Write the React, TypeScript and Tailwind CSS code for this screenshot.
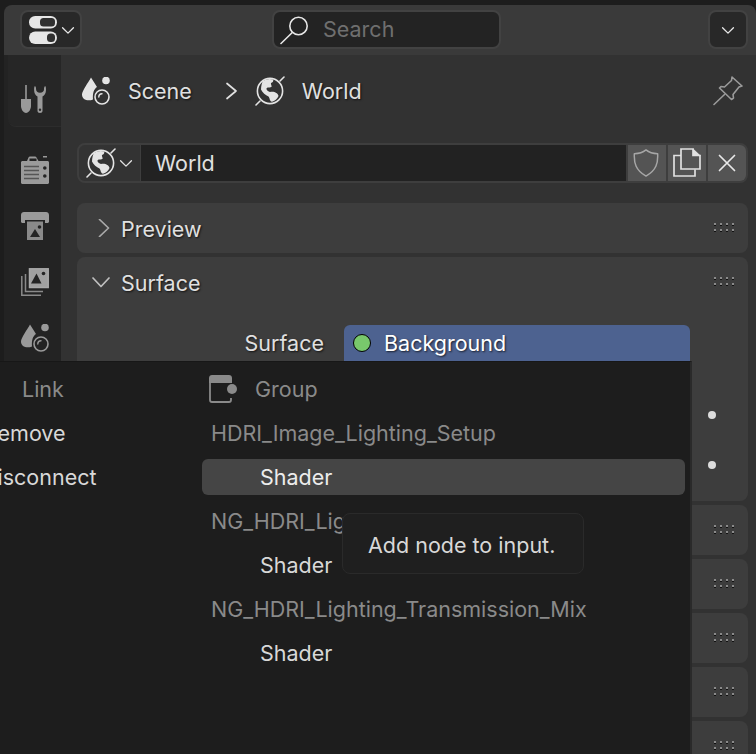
import React from "react";

const Chev = ({ className = "", d = "M3 6l6 6 6-6" }: { className?: string; d?: string }) => (
  <svg viewBox="0 0 18 18" className={className} fill="none" stroke="currentColor" strokeWidth="1.7" strokeLinecap="round" strokeLinejoin="round"><path d={d} /></svg>
);

const Globe = ({ className = "" }: { className?: string }) => (
  <svg viewBox="0 0 30 30" className={className}>
    <circle cx="15" cy="15" r="12.6" fill="none" stroke="#e4e4e4" strokeWidth="1.6" />
    <path d="M25 5l4-4M5 25l-4 4" stroke="#e4e4e4" strokeWidth="1.6" strokeLinecap="round" />
    <path d="M9 4.500c3-1.600 6-2 9-1 1 1.500-.5 3-2 3.500-.5 1.600 1 2.500.5 4-2 1-4.500-.5-5 1.500-.3 2 2 3 3.500 3.500 4-1 8 1 8.500 4-1 3-4 5-6.500 5.800-2.500-.5-2-3.500-3.500-5.300-3-1.500-6-3.500-7.500-7 0-3.500 1-7 2.500-10z" fill="#e4e4e4" />
  </svg>
);

const SceneIcon = ({ color = "#e4e4e4" }: { color?: string }) => (
  <svg viewBox="0 0 28 28" className="w-[28px] h-[28px]">
    <path d="M9 0.500L15 10C12 12 10.500 16 11 22.500 6 24.500 0 23 0 17.500 0 14 6 6 9 0.500z" fill={color} />
    <circle cx="24" cy="3.500" r="3.800" fill={color} />
    <circle cx="20" cy="20" r="7" fill="none" stroke={color} strokeWidth="1.600" />
    <path d="M16.800 20c0-1.800 1.400-3.200 3.200-3.200" fill="none" stroke={color} strokeWidth="1.400" strokeLinecap="round" />
  </svg>
);

const Dots = () => (
  <svg width="21" height="10" viewBox="0 0 21 10" className="block">
    {[0, 6, 12, 18].map((x) => (
      <g key={x}>
        <rect x={x} y="0" width="2" height="2" fill="#8a8a8a" />
        <rect x={x} y="2" width="2" height="1" fill="#111" />
        <rect x={x} y="6" width="2" height="2" fill="#8a8a8a" />
        <rect x={x} y="8" width="2" height="1" fill="#111" />
      </g>
    ))}
  </svg>
);

const shadow = "[text-shadow:1px_1px_2px_rgba(0,0,0,0.7)]";

const EmptyPanel = () => (
  <div className="h-[50px] rounded-[8px] bg-[#3d3d3d] flex items-center justify-end pr-[13px] shrink-0">
    <Dots />
  </div>
);

export default function App() {
  return (
    <div className="relative w-[756px] h-[754px] overflow-hidden bg-[#1d1d1d] pt-[5px] pl-[4px] text-[21.5px] leading-[25px]" style={{ fontFamily: "Inter, 'Noto Sans', sans-serif" }}>
      <div className="flex flex-col h-[749px] rounded-t-[8px] overflow-hidden">
        {/* header */}
        <div className="h-[50px] shrink-0 bg-[#3a3a3a] flex items-center pl-[16px] pr-[8px] pb-[1px]">
          <div className="w-[62px] h-[39px] rounded-[8px] bg-[#282828] border-2 border-[#424242] flex items-center pl-[7px] gap-[4px]">
            <svg viewBox="0 0 28 28" className="w-[28px] h-[28px]">
              <rect x="0" y="0" width="28" height="12.500" rx="6.200" fill="#e6e6e6" />
              <rect x="11" y="2" width="15" height="8.500" rx="3.500" fill="#303030" />
              <rect x="0" y="15.500" width="28" height="12.500" rx="6.200" fill="#e6e6e6" />
              <rect x="18" y="17.500" width="8" height="8.500" rx="3.500" fill="#303030" />
            </svg>
            <Chev className="w-[14px] h-[14px] text-[#e6e6e6]" d="M2 6l7 7 7-7" />
          </div>
          <div className="ml-[190px] w-[229px] h-[39px] rounded-[8px] bg-[#232323] border-2 border-[#424242] flex items-center pl-[6px] gap-[13px]">
            <svg viewBox="0 0 30 30" className="w-[30px] h-[30px]" fill="none" stroke="#e6e6e6" strokeWidth="1.600" strokeLinecap="round">
              <circle cx="18.500" cy="11" r="8.700" />
              <path d="M12.300 17.500L1 28.500" />
            </svg>
            <span className="text-[#6f6f6f]">Search</span>
          </div>
          <div className="ml-auto w-[40px] h-[39px] rounded-[8px] bg-[#282828] border-2 border-[#424242] flex items-center justify-center">
            <Chev className="w-[14px] h-[14px] text-[#e6e6e6]" d="M2 6l7 7 7-7" />
          </div>
        </div>

        <div className="flex flex-1 min-h-0">
          {/* sidebar */}
          <div className="w-[57px] shrink-0 bg-[#232323] flex flex-col">
            <div className="h-[72px] ml-[4px] rounded-bl-[8px] bg-[#262626] border-b border-[#2c2c2c] flex items-center pl-[13px]">
              <svg viewBox="0 0 28 28" className="w-[28px] h-[28px] mt-[17px]">
                <rect x="4.200" y="0" width="1.600" height="14" fill="#9a9a9a" />
                <path d="M0 14h10v7c0 3-2.200 7-5 7s-5-4-5-7z" fill="#9a9a9a" />
                <path d="M14 1c-1 .8-.9 2.500-.9 4 0 3 1.300 5.500 3.400 6.500v14.500c0 1 1 2 2.500 2s2.500-1 2.500-2v-14.500c2.100-1 3.500-3.500 3.500-6.500 0-1.500.1-3.200-.9-4-1 .6-1.100 2.500-1.100 3.500 0 2-1.500 3.200-4 3.200s-3.900-1.200-3.900-3.200c0-1-.1-2.900-1.100-3.500z" fill="#9a9a9a" />
                <circle cx="19" cy="24.800" r="1.200" fill="#2a2a2a" />
              </svg>
            </div>
            <div className="flex flex-col pl-[17px] pt-[29px] gap-[28px]">
              <svg viewBox="0 0 28 28" className="w-[28px] h-[28px]">
                <path d="M1.500 5h4.500l1.500-3.500c.3-.6.800-1 1.500-1h5c.7 0 1.200.4 1.500 1L17.500 5h9c.8 0 1.500.7 1.500 1.500v20c0 .8-.7 1.500-1.500 1.500h-25C.7 28 0 27.300 0 26.500v-20C0 5.700.7 5 1.500 5z" fill="#9a9a9a" />
                <rect x="22" y="0" width="4" height="1.500" fill="#9a9a9a" />
                <rect x="8.500" y="2.500" width="7" height="2.500" fill="#232323" />
                <path d="M3 10.500h15M3 14.500h15M3 18.500h15M3 22.500h15" stroke="#555" strokeWidth="1.700" />
                <circle cx="23.800" cy="12" r="1.800" fill="#232323" />
                <circle cx="23.800" cy="20" r="1.800" fill="#232323" />
              </svg>
              <svg viewBox="0 0 28 28" className="w-[28px] h-[28px]">
                <path d="M3 0h22c1.700 0 3 1.300 3 3v6.500c0 .8-.7 1.500-1.500 1.500H24V8H4v3H1.500C.7 11 0 10.300 0 9.500V3c0-1.700 1.300-3 3-3z" fill="#9a9a9a" />
                <rect x="6" y="9.500" width="16" height="18.500" fill="#8a8a8a" />
                <path d="M9 25l5-8 5 8z" fill="#232323" />
                <circle cx="18.500" cy="15" r="1.800" fill="#232323" />
              </svg>
              <svg viewBox="0 0 28 28" className="w-[28px] h-[28px]">
                <path d="M0.800 8v19.200h19.200M4.500 6v17.500H22" fill="none" stroke="#8a8a8a" strokeWidth="1.500" />
                <rect x="8.500" y="0.800" width="18.700" height="18.700" fill="#a0a0a0" stroke="#a8a8a8" strokeWidth="1.500" />
                <path d="M10 15.500l5.500-10 5 10z" fill="#232323" />
                <circle cx="22.500" cy="5.500" r="1.800" fill="#232323" />
              </svg>
              <SceneIcon color="#9a9a9a" />
            </div>
          </div>

          {/* main */}
          <div className="flex-1 min-w-0 bg-[#323232] pl-[16px] pr-[8px]">
            <div className="h-[72px] flex items-center text-[#e0e0e0] relative">
              <span className="ml-[5px]"><SceneIcon /></span>
              <span className={`ml-[18px] ${shadow}`}>Scene</span>
              <Chev className="ml-[30px] w-[18px] h-[18px] text-[#e0e0e0]" d="M5 1.500l9 7.500-9 7.500" />
              <Globe className="ml-[15px] w-[30px] h-[30px]" />
              <span className={`ml-[17px] ${shadow}`}>World</span>
              <svg viewBox="0 0 30 30" className="ml-auto mr-[5px] w-[30px] h-[30px]" fill="none" stroke="#9a9a9a" strokeWidth="1.600" strokeLinejoin="round" strokeLinecap="round">
                <path d="M19 1l10 9-3 1-6 7.500.5 3.500-2 1.500L6.500 12 8 10.500l3.500.5L18.500 4.500z" />
                <path d="M11.500 18.500L1 28.500" />
              </svg>
            </div>

            <div className="mt-[16px] h-[40px] rounded-[8px] bg-[#3e3e3e] border-2 border-[#3e3e3e] flex gap-[2px] text-[#e0e0e0]">
              <div className="w-[61px] shrink-0 bg-[#333333] rounded-l-[6px] flex items-center pl-[7px] gap-[3px]">
                <Globe className="w-[30px] h-[30px]" />
                <Chev className="w-[14px] h-[14px]" d="M2 6l7 7 7-7" />
              </div>
              <div className="flex-1 -ml-[1px] bg-[#222222] flex items-center pl-[14px]">World</div>
              <div className="w-[38px] shrink-0 bg-[#545454] flex items-center justify-center pr-[2px]">
                <svg viewBox="0 0 28 30" className="w-[28px] h-[28px]" fill="none" stroke="#a6a6a6" strokeWidth="1.600" strokeLinejoin="round">
                  <path d="M14 1c3 2.500 7.500 4 12.500 4 .5 10-1.500 18-12.500 24C3 23 1 15 1.500 5 6.500 5 11 3.500 14 1z" />
                </svg>
              </div>
              <div className="w-[38px] shrink-0 bg-[#545454] flex items-center justify-center">
                <svg viewBox="0 0 30 30" className="w-[30px] h-[30px]" fill="none" stroke="#e0e0e0" strokeWidth="1.700">
                  <path d="M9 7.500H2V28h21v-6.500" />
                  <path d="M9 1h12v6.500h7V21H9z" />
                  <path d="M21 0.500l8 7.500h-8z" fill="#e0e0e0" stroke="none" />
                </svg>
              </div>
              <div className="w-[38px] shrink-0 bg-[#545454] rounded-r-[6px] flex items-center justify-center">
                <svg viewBox="0 0 18 18" className="w-[18px] h-[18px]" stroke="#e8e8e8" strokeWidth="1.700" strokeLinecap="round"><path d="M1.500 1.500l15 15M16.500 1.500l-15 15" /></svg>
              </div>
            </div>

            <div className="mt-[20px] flex flex-col gap-[4px]">
              <div className="h-[50px] rounded-[8px] bg-[#3d3d3d] flex items-center pl-[18px] pr-[13px] text-[#e0e0e0]">
                <Chev className="w-[18px] h-[18px] text-[#a8a8a8]" d="M4.500 0.500l9 8.500-9 8.500" />
                <span className={`ml-[8px] mt-[2px] ${shadow}`}>Preview</span>
                <span className="ml-auto"><Dots /></span>
              </div>
              <div className="h-[244px] rounded-[8px] bg-[#3d3d3d] relative shrink-0 text-[#e0e0e0]">
                <div className="h-[50px] flex items-center pl-[15px] pr-[13px]">
                  <Chev className="w-[18px] h-[18px] text-[#c0c0c0]" d="M1 5l8 8.500 8-8.500" />
                  <span className={`ml-[11px] mt-[2px] ${shadow}`}>Surface</span>
                  <span className="ml-auto"><Dots /></span>
                </div>
                <div className="mt-[18px] flex items-center">
                  <span className={`w-[267px] text-right pr-[20px] ${shadow}`}>Surface</span>
                  <div className="w-[346px] h-[36px] rounded-t-[6px] bg-[#4d6290] flex items-center pl-[9px] gap-[13px] text-white">
                    <span className="w-[18px] h-[18px] rounded-full bg-[#78c86c] border border-black" />
                    <span className={shadow}>Background</span>
                  </div>
                </div>
                <span className="absolute left-[631px] top-[154px] w-[8px] h-[8px] rounded-full bg-[#dcdcdc]" />
                <span className="absolute left-[631px] top-[204px] w-[8px] h-[8px] rounded-full bg-[#dcdcdc]" />
              </div>
              <EmptyPanel />
              <EmptyPanel />
              <EmptyPanel />
              <EmptyPanel />
              <EmptyPanel />
            </div>
          </div>
        </div>
      </div>

      {/* popup menu */}
      <div className="absolute left-0 top-[361px] w-[692px] h-[393px] bg-[#1d1d1d] border-t border-[#171717] border-r-2 border-r-[#2a2a2a] overflow-hidden flex pt-[5px] text-[#d8d8d8]">
        <div className="w-[202px] shrink-0 flex flex-col">
          <div className="h-[44px] flex items-center pl-[22px] text-[#8a8a8a]">Link</div>
          <div className="h-[44px] flex items-center -ml-[16px]">Remove</div>
          <div className="h-[44px] flex items-center -ml-[18px]">Disconnect</div>
        </div>
        <div className="w-[483px] flex flex-col">
          <div className="h-[44px] flex items-center pl-[7px] gap-[18px] text-[#8a8a8a]">
            <svg viewBox="0 0 28 28" className="w-[28px] h-[28px]">
              <path d="M3 0h17c1.700 0 3 1.300 3 3v5H0V3c0-1.700 1.300-3 3-3z" fill="#8a8a8a" />
              <path d="M1 6v19c0 1.100.9 2 2 2h17c1.100 0 2-.9 2-2v-2M22 6v2" fill="none" stroke="#8a8a8a" strokeWidth="1.800" />
              <circle cx="23" cy="14" r="5" fill="#8a8a8a" />
            </svg>
            <span>Group</span>
          </div>
          <div className="h-[44px] flex items-center pl-[9px] text-[#8a8a8a]">HDRI_Image_Lighting_Setup</div>
          <div className="h-[36px] mt-[4px] mb-[4px] rounded-[6px] bg-[#454545] flex items-center pl-[58px] text-[#ececec]">Shader</div>
          <div className="h-[44px] flex items-center pl-[9px] text-[#8a8a8a]">NG_HDRI_Lighting</div>
          <div className="h-[44px] flex items-center pl-[58px]">Shader</div>
          <div className="h-[44px] flex items-center pl-[9px] text-[#8a8a8a]">NG_HDRI_Lighting_Transmission_Mix</div>
          <div className="h-[44px] flex items-center pl-[58px]">Shader</div>
        </div>
      </div>

      {/* tooltip */}
      <div className="absolute left-[342px] top-[513px] w-[242px] h-[61px] rounded-[8px] bg-[#1f1f1f] border border-[#2a2a2a] shadow-[0_-2px_0_#1d1d1d] flex items-center pl-[25px] pt-[3px] text-[#d8d8d8]">Add node to input.</div>
    </div>
  );
}
